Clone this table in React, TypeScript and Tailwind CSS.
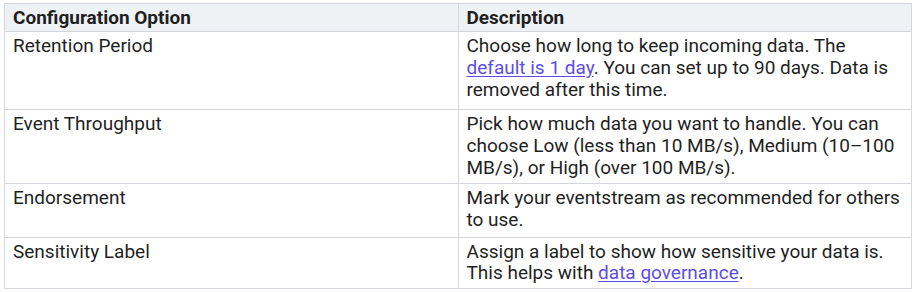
import React from 'react';

type Row = { option: string; description: React.ReactNode; pad: string };

const Link = ({ children }: { children: React.ReactNode }) => (
  <a href="#" className="text-[#5a4ee6] underline underline-offset-2">
    {children}
  </a>
);

const rows: Row[] = [
  {
    option: 'Retention Period',
    pad: 'pb-[9px]',
    description: (
      <>
        Choose how long to keep incoming data. The <Link>default is 1 day</Link>. You can set up to 90
        days. Data is removed after this time.
      </>
    ),
  },
  {
    option: 'Event Throughput',
    pad: 'pb-[4px]',
    description:
      'Pick how much data you want to handle. You can choose Low (less than 10 MB/s), Medium (10–100 MB/s), or High (over 100 MB/s).',
  },
  {
    option: 'Endorsement',
    pad: 'pb-[6px]',
    description: 'Mark your eventstream as recommended for others to use.',
  },
  {
    option: 'Sensitivity Label',
    pad: 'pb-[4px]',
    description: (
      <>
        Assign a label to show how sensitive your data is. This helps with <Link>data governance</Link>.
      </>
    ),
  },
];

export default function App() {
  return (
    <div className="bg-white pl-1 pt-[3px] font-['Roboto',sans-serif] text-[19px] leading-[1.15] text-[#1f1f1f]">
      <table className="w-[908px] table-fixed border-collapse">
        <thead>
          <tr className="bg-[#eff2f5]">
            <th className="w-1/2 border border-[#d3d6dc] px-2 pt-[3px] pb-[2px] text-left font-bold">
              Configuration Option
            </th>
            <th className="w-1/2 border border-[#d3d6dc] px-2 pt-[3px] pb-[2px] text-left font-bold">
              Description
            </th>
          </tr>
        </thead>
        <tbody>
          {rows.map((r) => (
            <tr key={r.option}>
              <td className={`border border-[#d3d6dc] px-2 pt-[3px] align-top ${r.pad}`}>{r.option}</td>
              <td className={`border border-[#d3d6dc] px-2 pt-[3px] align-top ${r.pad}`}>{r.description}</td>
            </tr>
          ))}
        </tbody>
      </table>
    </div>
  );
}
